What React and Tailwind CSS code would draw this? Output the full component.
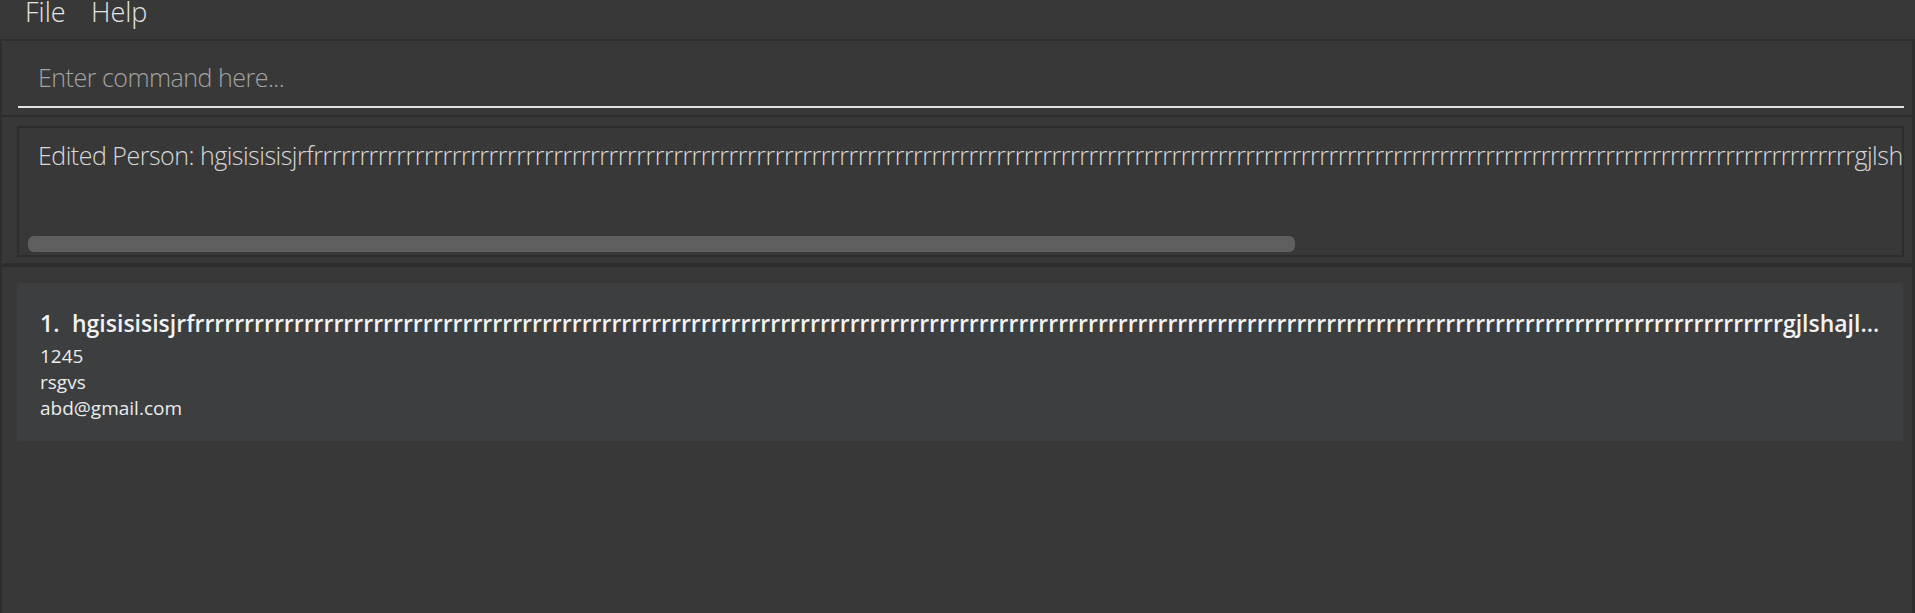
import React from "react";

const R1 = "r".repeat(167);
const R2 = "r".repeat(160);

export default function App() {
  return (
    <div className="w-[1915px] h-[613px] bg-[#383838] flex flex-col overflow-hidden font-['Open_Sans',sans-serif]">
      {/* Menu bar */}
      <div className="h-[39px] shrink-0 flex items-start bg-[#383838]">
        <span className="ml-[25px] w-[66px] text-[27px] leading-[24px] font-light text-[#e4e4e4]">File</span>
        <span className="text-[27px] leading-[24px] font-light text-[#e4e4e4]">Help</span>
      </div>
      <div className="flex-1 flex flex-col border-t-2 border-l-2 border-r-[3px] border-[#2e2e2e]">
        {/* Command box */}
        <div className="h-[74px] shrink-0 pl-[16px] pr-[8px] pt-[18px]">
          <div className="border-b-2 border-[#e2e2e2] pl-[20px] h-[49px]">
            <div className="text-[25px] leading-[36px] font-light text-[#a3a3a3] tracking-[-0.5px]">Enter command here...</div>
          </div>
        </div>
        <div className="h-[2px] shrink-0 bg-[#2c2c2c]" />
        {/* Result display */}
        <div className="h-[146px] shrink-0 pl-[15px] pr-[8px] pt-[9px]">
          <div className="h-[131px] border-2 border-[#2d2d2d] flex flex-col overflow-hidden">
            <div className="pl-[19px] pt-[9px] text-[25px] leading-[36px] font-light text-[#d8d8d8] whitespace-nowrap overflow-hidden tracking-[-0.5px]">
              {"Edited Person: hgisisisisjrf" + R1 + "gjlshajlkjasldkjf"}
            </div>
            <div className="flex-1" />
            <div className="ml-[9px] mb-[3px] w-[1267px] h-[16px] rounded-[6px] bg-[#5f5f5f]" />
          </div>
        </div>
        <div className="h-[4px] shrink-0 bg-[#2e2e2e]" />
        {/* List */}
        <div className="flex-1 pl-[15px] pr-[9px] pt-[16px]">
          <div className="h-[158px] bg-[#3c3e3f] pl-[23px] pr-[21px] pt-[24px]">
            <div className="flex items-baseline gap-[5px] text-[23px] leading-[32px] font-semibold text-[#f2f2f2] whitespace-nowrap overflow-hidden">
              <span className="shrink-0 w-[27px]">1.</span>
              <span className="overflow-hidden text-ellipsis min-w-0">{"hgisisisisjrf" + R2 + "gjlshajlkjsdhfkjsdhf"}</span>
            </div>
            <div className="mt-[4px] text-[19px] leading-[26px] text-[#ececec]">
              <div>1245</div>
              <div>rsgvs</div>
              <div>abd@gmail.com</div>
            </div>
          </div>
        </div>
      </div>
    </div>
  );
}
